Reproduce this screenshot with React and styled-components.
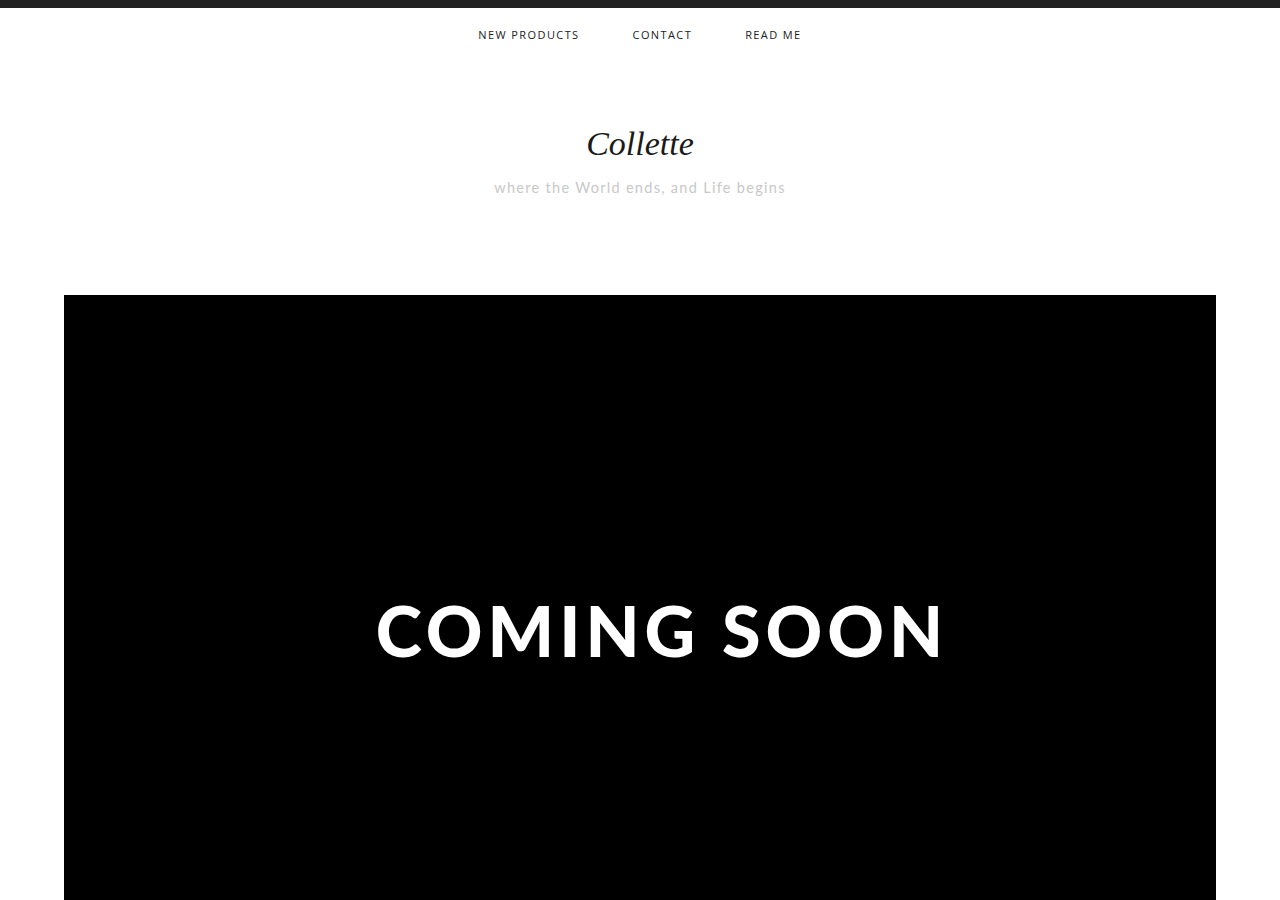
import React from "react";
import styled, { createGlobalStyle } from "styled-components";

const Global = createGlobalStyle`
  html, body { margin: 0; padding: 0; background: #fff; }
  body { font-family: "Lato", "Open Sans", sans-serif; }
`;

const TopBar = styled.div`
  height: 8px;
  background: #222;
`;

const Nav = styled.nav`
  display: flex;
  justify-content: center;
  gap: 53px;
  padding-top: 20px;
  height: 32px;
  box-sizing: border-box;
`;

const NavLink = styled.a`
  font-family: "Open Sans", sans-serif;
  font-size: 11px;
  line-height: 14px;
  letter-spacing: 1.4px;
  text-transform: uppercase;
  color: #222;
  text-decoration: none;
  font-weight: 500;
`;

const Header = styled.header`
  display: flex;
  flex-direction: column;
  align-items: center;
  padding-top: 82px;
`;

const Title = styled.h1`
  margin: 0;
  font-family: "Liberation Serif", "DejaVu Serif", serif;
  font-style: italic;
  font-weight: 400;
  font-size: 34px;
  line-height: 44px;
  color: #1a1a1a;
`;

const Tagline = styled.p`
  margin: 12px 0 0;
  font-family: "Lato", sans-serif;
  font-size: 14.5px;
  font-weight: 400;
  line-height: 20px;
  letter-spacing: 1.3px;
  color: #c8c8c8;
`;

const Main = styled.main`
  padding: 97px 64px 0;
`;

const Banner = styled.div`
  background: #000;
  aspect-ratio: 16 / 9;
  display: flex;
  align-items: center;
  justify-content: center;
`;

const BannerText = styled.div`
  font-family: "Lato", sans-serif;
  font-weight: 900;
  font-size: 70px;
  letter-spacing: 5px;
  color: #fff;
  margin-left: 44px;
  margin-bottom: -22px;
  line-height: 1;
`;

export default function App() {
  return (
    <>
      <Global />
      <TopBar />
      <Nav>
        <NavLink href="#">New Products</NavLink>
        <NavLink href="#">Contact</NavLink>
        <NavLink href="#">Read Me</NavLink>
      </Nav>
      <Header>
        <Title>Collette</Title>
        <Tagline>where the World ends, and Life begins</Tagline>
      </Header>
      <Main>
        <Banner>
          <BannerText>COMING SOON</BannerText>
        </Banner>
      </Main>
    </>
  );
}
